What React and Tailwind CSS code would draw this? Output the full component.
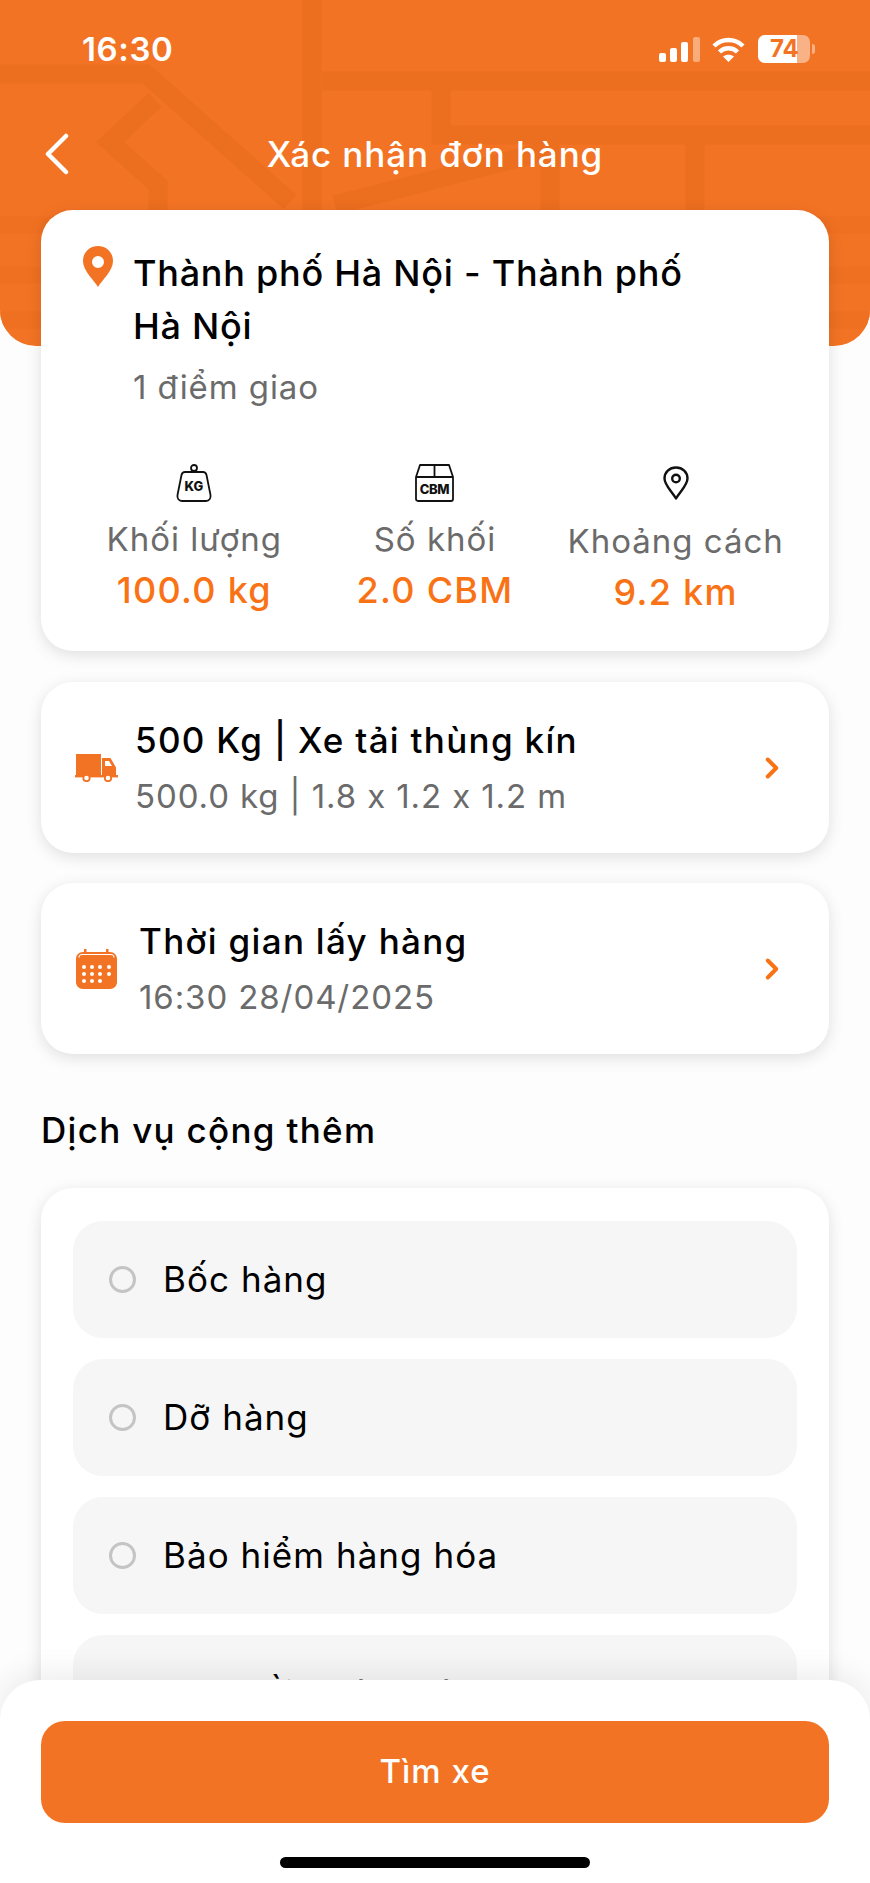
import React from "react";
import { ChevronRight } from "lucide-react";

const ORANGE = "#f37324";

const Roads = () => (
  <svg className="absolute inset-0" width="870" height="346" viewBox="0 0 870 346" fill="none">
    <g stroke="#ec6e1f" strokeWidth="19">
      <path d="M312 0V215" />
      <path d="M0 74H146L290 202" />
      <path d="M322 81H870" />
      <path d="M441 90V135H870" />
      <path d="M155 100L110 142L158 185V240" />
      <path d="M335 205L550 150" />
      <path d="M550 143V346" />
      <path d="M695 143V346" />
    </g>
    <g stroke="#ef7021" strokeWidth="17">
      <path d="M0 225H870" />
      <path d="M0 275H870" />
      <path d="M0 320H870" />
    </g>
  </svg>
);

const KgIcon = () => (
  <svg width="36" height="38" viewBox="0 0 36 38" fill="none" stroke="#111" strokeWidth="1.8">
    <circle cx="18" cy="4" r="3" />
    <path d="M9 8H27C29 8 30 9 30.5 11L34.5 31C35 34 33.5 37 30 37H6C2.5 37 1 34 1.5 31L5.5 11C6 9 7 8 9 8Z" strokeLinejoin="round" />
    <text x="18" y="27" textAnchor="middle" fontSize="13" fontWeight="800" fill="#111" stroke="none" fontFamily="Inter">KG</text>
  </svg>
);

const CbmIcon = () => (
  <svg width="39" height="38" viewBox="0 0 39 38" fill="none" stroke="#111" strokeWidth="1.8">
    <path d="M5 1H34L38 13V35C38 36.2 37.2 37 36 37H3C1.8 37 1 36.2 1 35V13Z" strokeLinejoin="round" />
    <path d="M1 13H38M19.5 1V13" />
    <text x="19.5" y="30" textAnchor="middle" fontSize="13" fontWeight="800" fill="#111" stroke="none" fontFamily="Inter" letterSpacing="-0.3">CBM</text>
  </svg>
);

const PinOutline = () => (
  <svg width="26" height="34" viewBox="0 0 26 34" fill="none" stroke="#111" strokeWidth="2.4">
    <path d="M13 32.5C8.5 25 1.5 19 1.5 12.5C1.5 6 6.5 1.5 13 1.5C19.5 1.5 24.5 6 24.5 12.5C24.5 19 17.5 25 13 32.5Z" strokeLinejoin="round" />
    <circle cx="13" cy="12.5" r="3.8" />
  </svg>
);

const PinFilled = () => (
  <svg width="30" height="41" viewBox="0 0 30 41">
    <path fillRule="evenodd" fill={ORANGE} d="M15 41C11 34 0 25 0 15C0 6.5 6.5 0 15 0C23.5 0 30 6.5 30 15C30 25 19 34 15 41ZM15 10A6 6 0 1 0 15 22A6 6 0 1 0 15 10Z" />
  </svg>
);

const Truck = () => (
  <svg width="43" height="28" viewBox="0 0 43 28" fill={ORANGE}>
    <rect x="1" y="0" width="25" height="21" />
    <path d="M27 4H35.5L41 13.5V21H27ZM30 7V12H37L34 7Z" fillRule="evenodd" />
    <rect x="0" y="21" width="43" height="2.4" />
    <circle cx="11.5" cy="24" r="3.2" fill="#fff" stroke={ORANGE} strokeWidth="1.8" />
    <circle cx="33" cy="24" r="3.2" fill="#fff" stroke={ORANGE} strokeWidth="1.8" />
  </svg>
);

const Calendar = () => (
  <svg width="41" height="40" viewBox="0 0 41 40" fill={ORANGE}>
    <path d="M8 0H10.500V3H30V0H32.500V3H34C38 3 41 6 41 10V33C41 37 38 40 34 40H7C3 40 0 37 0 33V10C0 6 3 3 7 3H8Z" />
    <path d="M3 8.500C3 6.500 4.500 5.500 6.500 5.500H34.500C36.500 5.500 38 6.500 38 8.500" fill="none" stroke="#fff" strokeWidth="1.2" />
    {[18, 25, 32].map((y) =>
      [8, 16, 24, 33].map((x) =>
        y === 32 && x === 33 ? null : <circle key={`${x}-${y}`} cx={x} cy={y} r="2" fill="#fff" />
      )
    )}
  </svg>
);

const Stat = ({ icon, label, value, shift }) => (
  <div className="flex flex-col items-center">
    <div className="flex h-[40px] items-center">{icon}</div>
    <div className={`${shift} text-[33px] leading-[46px] tracking-[1px] text-[#6b6b6b]`}>{label}</div>
    <div className="mt-[5px] text-[36px] font-medium leading-[46px] tracking-[1.3px] text-[#f97316]">{value}</div>
  </div>
);

const cardShadow = "rounded-[32px] bg-white shadow-[0_4px_16px_rgba(0,0,0,0.12)]";

const RowCard = ({ icon, title, sub, gap }) => (
  <div className={`${cardShadow} flex h-[171px] items-center pl-[33px] pr-[40px]`}>
    <div className="flex w-[44px] shrink-0 justify-center">{icon}</div>
    <div className={`flex-1 ${gap}`}>
      <div className="text-[35px] font-[450] leading-[46px] tracking-[1.3px] text-black">{title}</div>
      <div className="mt-[10px] text-[33px] leading-[46px] tracking-[0.9px] text-[#6b6b6b]">{sub}</div>
    </div>
    <ChevronRight size={34} strokeWidth={2.8} color="#f97316" />
  </div>
);

const Service = ({ label }) => (
  <div className="flex h-[117px] shrink-0 items-center rounded-[30px] bg-[#f6f6f6] pl-[36px]">
    <div className="h-[27px] w-[27px] rounded-full border-[3px] border-[#c4c4c4]" />
    <div className="ml-[27px] text-[35px] tracking-[1.05px] text-black">{label}</div>
  </div>
);

export default function App() {
  return (
    <div className="relative h-[1883px] w-[870px] overflow-hidden bg-[#fdfdfd] font-['Inter','Noto_Sans',sans-serif] [font-feature-settings:'calt'_0]">
      <header className="relative h-[346px] overflow-hidden rounded-b-[36px] bg-[#f37324] text-white">
        <Roads />
        <div className="relative flex h-[100px] items-start justify-between pl-[82px] pr-[60px] pt-[29px]">
          <span className="text-[33px] font-semibold leading-[40px] tracking-[0.6px]">16:30</span>
          <div className="flex items-center pt-[6px]">
            <svg width="41" height="25" viewBox="0 0 41 25">
              <rect x="0" y="16" width="7" height="9" rx="2" fill="#fff" />
              <rect x="11" y="11" width="7" height="14" rx="2" fill="#fff" />
              <rect x="22" y="5" width="7" height="20" rx="2" fill="#fff" />
              <rect x="34" y="0" width="7" height="25" rx="2" fill="#fff" fillOpacity="0.4" />
            </svg>
            <svg className="ml-[12px]" width="33" height="25" viewBox="0 0 33 25" fill="none" stroke="#fff" strokeWidth="4.5">
              <path d="M2 9C10 1 23 1 31 9" />
              <path d="M7.500 15C12.500 10 20.500 10 25.500 15" />
              <path d="M16.500 25L11 19.500C14 17 19 17 22 19.500Z" fill="#fff" stroke="none" />
            </svg>
            <div className="relative ml-[13px] flex h-[28px] w-[52px] rounded-[7px] bg-white/45">
              <div className="h-full w-[39px] rounded-l-[7px] bg-white" />
              <span className="absolute left-[12px] top-0 text-[24px] font-bold leading-[28px] text-[#f37324]">74</span>
              <div className="absolute -right-[5px] top-[9px] h-[10px] w-[3px] rounded-r-full bg-white/45" />
            </div>
          </div>
        </div>
        <div className="relative mt-[26px] flex h-[56px] items-center justify-center">
          <svg className="absolute left-[44px]" width="26" height="42" viewBox="0 0 26 42" fill="none" stroke="#fff" strokeWidth="4.5" strokeLinecap="round" strokeLinejoin="round">
            <path d="M22 3L4 21L22 39" />
          </svg>
          <span className="text-[35px] font-[450] tracking-[0.9px]">Xác nhận đơn hàng</span>
        </div>
      </header>

      <main className="relative mx-[41px] -mt-[136px] flex flex-col">
        <section className={`${cardShadow} h-[441px] pl-[42px] pr-[33px] pt-[36px]`}>
          <div className="flex items-start">
            <PinFilled />
            <div className="ml-[20px] pt-[1px]">
              <div className="w-[570px] text-[36px] font-[450] leading-[53px] tracking-[0.75px] text-black">Thành phố Hà Nội - Thành phố Hà Nội</div>
              <div className="mt-[11px] text-[33px] leading-[46px] tracking-[0.9px] text-[#6b6b6b]">1 điểm giao</div>
            </div>
          </div>
          <div className="-ml-[9px] mt-[53px] grid grid-cols-3">
            <Stat icon={<KgIcon />} label="Khối lượng" value="100.0 kg" shift="mt-[13px]" />
            <Stat icon={<CbmIcon />} label="Số khối" value="2.0 CBM" shift="mt-[13px]" />
            <Stat icon={<PinOutline />} label="Khoảng cách" value="9.2 km" shift="mt-[15px]" />
          </div>
        </section>

        <div className="mt-[31px]">
          <RowCard icon={<Truck />} title="500 Kg | Xe tải thùng kín" sub="500.0 kg | 1.8 x 1.2 x 1.2 m" gap="ml-[17px]" />
        </div>
        <div className="mt-[30px]">
          <RowCard icon={<Calendar />} title="Thời gian lấy hàng" sub="16:30 28/04/2025" gap="ml-[21px]" />
        </div>

        <h2 className="mt-[53px] text-[35px] font-[450] leading-[46px] tracking-[1.3px] text-black">Dịch vụ cộng thêm</h2>

        <section className={`${cardShadow} mt-[35px] flex h-[600px] flex-col gap-[21px] px-[32px] pt-[33px]`}>
          <Service label="Bốc hàng" />
          <Service label="Dỡ hàng" />
          <Service label="Bảo hiểm hàng hóa" />
          <Service label="Thu hồi chứng từ" />
        </section>
      </main>

      <footer className="absolute inset-x-0 bottom-0 h-[203px] rounded-t-[40px] bg-white px-[41px] pt-[41px] shadow-[0_-8px_30px_rgba(0,0,0,0.07)]">
        <button className="h-[102px] w-full rounded-[24px] bg-[#f37324] text-[33px] font-medium tracking-[1px] text-white">Tìm xe</button>
        <div className="mx-auto mt-[34px] h-[11px] w-[310px] rounded-full bg-black" />
      </footer>
    </div>
  );
}
